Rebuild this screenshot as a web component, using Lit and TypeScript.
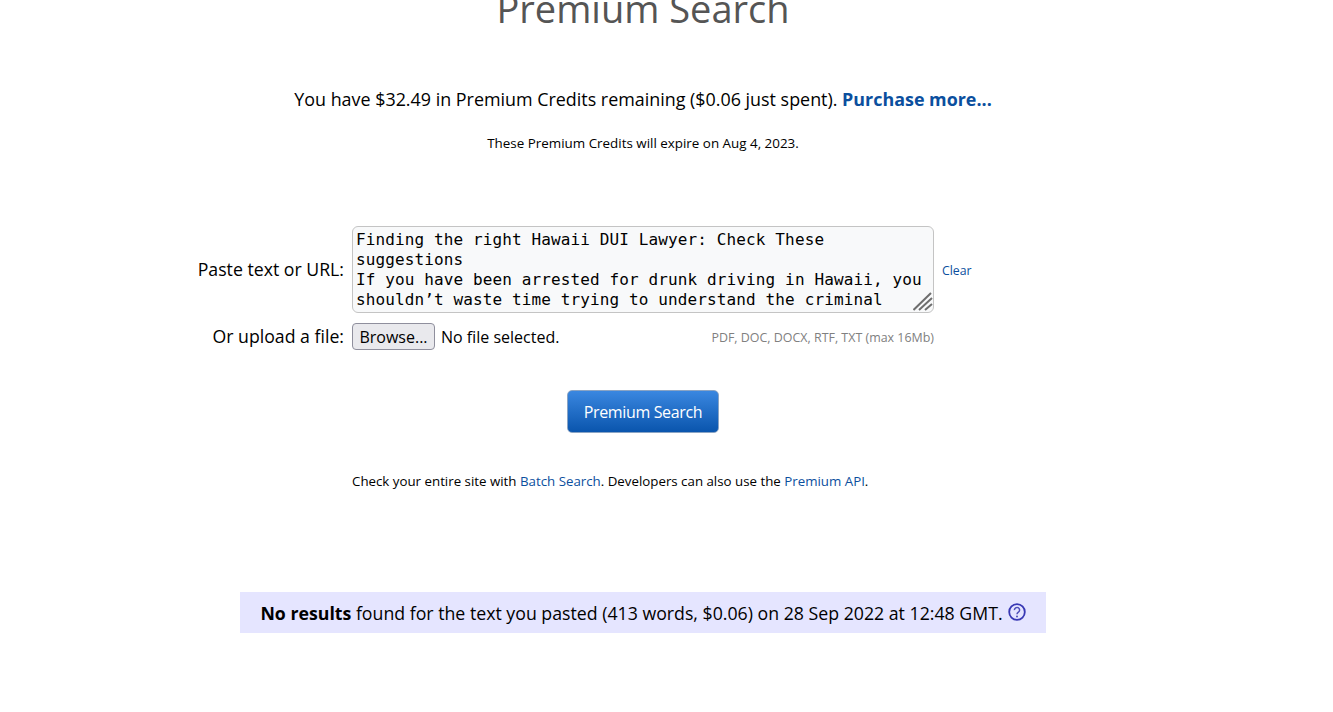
import { LitElement, html, css } from "lit";
import { customElement } from "lit/decorators.js";

@customElement("app-root")
export class AppRoot extends LitElement {
  static styles = css`
    :host {
      display: block;
      height: 712px;
      overflow: hidden;
      background: #fff;
      color: #000;
      font-family: "Open Sans", "Noto Sans", sans-serif;
    }
    .page {
      width: 1286px;
      display: flex;
      flex-direction: column;
      align-items: center;
    }
    h1 {
      margin: -18px 0 0;
      font-size: 38px;
      line-height: 52px;
      font-weight: 400;
      color: #555;
    }
    a {
      color: #0b4f9e;
      text-decoration: none;
    }
    .credits {
      margin: 53px 0 0;
      font-size: 17.9px;
      line-height: 24px;
    }
    .credits a {
      font-weight: 700;
    }
    .expire {
      margin: 23px 0 0;
      font-size: 13.4px;
      line-height: 18px;
    }
    .form {
      margin-top: 74px;
      align-self: stretch;
      display: grid;
      grid-template-columns: 344px 582px 80px;
      column-gap: 8px;
      row-gap: 9px;
      align-items: center;
    }
    .label {
      font-size: 17.7px;
      line-height: 24px;
      text-align: right;
    }
    .label.paste {
      padding-bottom: 2px;
    }
    .text-wrap {
      position: relative;
      height: 87px;
    }
    textarea {
      display: block;
      box-sizing: border-box;
      width: 582px;
      height: 87px;
      margin: 0;
      padding: 3px;
      border: 1px solid #c4c4c4;
      border-radius: 6px;
      background: #f8f9fa;
      color: #000;
      font-family: "DejaVu Sans Mono", monospace;
      font-size: 16px;
      line-height: 20px;
      letter-spacing: 0.12px;
      resize: none;
      overflow: hidden;
      outline: none;
    }
    .grip {
      position: absolute;
      right: 1px;
      bottom: 1px;
      width: 20px;
      height: 20px;
    }
    .clear {
      font-size: 12.3px;
      line-height: 16px;
      padding-top: 2px;
    }
    .file {
      display: flex;
      align-items: center;
      gap: 6px;
      height: 28px;
      font-family: "Open Sans", sans-serif;
      font-size: 16px;
    }
    .none {
      padding-top: 2px;
    }
    .browse {
      box-sizing: border-box;
      width: 83px;
      height: 27px;
      padding: 1px 0 0;
      border: 1px solid #8f8f9d;
      border-radius: 4px;
      background: #e9e9ed;
      color: #000;
      font: inherit;
    }
    .types-row {
      display: flex;
      justify-content: space-between;
      align-items: center;
    }
    .types {
      color: #808080;
      font-size: 12.45px;
      line-height: 16px;
      padding-top: 3px;
    }
    .submit {
      margin-top: 40px;
      box-sizing: border-box;
      width: 152px;
      height: 43px;
      padding: 0;
      border: 1px solid #8aa4c4;
      border-radius: 5px;
      background: linear-gradient(#3a87e0, #0a55ad);
      color: #fff;
      font-family: "Open Sans", sans-serif;
      font-size: 16px;
      letter-spacing: -0.35px;
    }
    .extra {
      margin: 39px 0 0;
      font-size: 13.3px;
      line-height: 18px;
      width: 582px;
    }
    .result {
      margin-top: 102px;
      box-sizing: border-box;
      width: 806px;
      height: 41px;
      display: flex;
      align-items: center;
      justify-content: center;
      gap: 5px;
      background: #e5e5ff;
      font-size: 17.73px;
    }
    .result svg {
      display: block;
      margin-top: -2px;
    }
  `;

  render() {
    return html`
      <div class="page">
        <h1>Premium Search</h1>
        <p class="credits">
          You have $32.49 in Premium Credits remaining ($0.06 just spent).
          <a href="#">Purchase more...</a>
        </p>
        <p class="expire">These Premium Credits will expire on Aug 4, 2023.</p>
        <div class="form">
          <div class="label paste">Paste text or URL:</div>
          <div class="text-wrap">
            <textarea spellcheck="false">Finding the right Hawaii DUI Lawyer: Check These suggestions
If you have been arrested for drunk driving in Hawaii, you shouldn’t waste time trying to understand the criminal</textarea>
            <svg class="grip" viewBox="0 0 20 20" fill="none" stroke="#6e6e6e" stroke-width="2">
              <path d="M.5 18 18 1M6 18 19 6M12 18l7-6" />
            </svg>
          </div>
          <a class="clear" href="#">Clear</a>
          <div class="label">Or upload a file:</div>
          <div class="types-row">
            <div class="file">
              <button class="browse">Browse...</button>
              <span class="none">No file selected.</span>
            </div>
            <span class="types">PDF, DOC, DOCX, RTF, TXT (max 16Mb)</span>
          </div>
          <div></div>
        </div>
        <button class="submit">Premium Search</button>
        <p class="extra">
          Check your entire site with <a href="#">Batch Search</a>. Developers can
          also use the <a href="#">Premium API</a>.
        </p>
        <div class="result">
          <span><b>No results</b> found for the text you pasted (413 words, $0.06) on 28 Sep 2022 at 12:48 GMT.</span>
          <svg width="18" height="18" viewBox="0 0 18 18" fill="none">
            <circle cx="9" cy="9" r="7.8" stroke="#3838b4" stroke-width="1.8" />
            <path d="M6.4 7.1a2.6 2.6 0 1 1 4 2.1c-.9.6-1.4 1-1.4 2.1" stroke="#5050b8" stroke-width="1.5" />
            <circle cx="9" cy="13.4" r="1" fill="#5050b8" />
          </svg>
        </div>
      </div>
    `;
  }
}
